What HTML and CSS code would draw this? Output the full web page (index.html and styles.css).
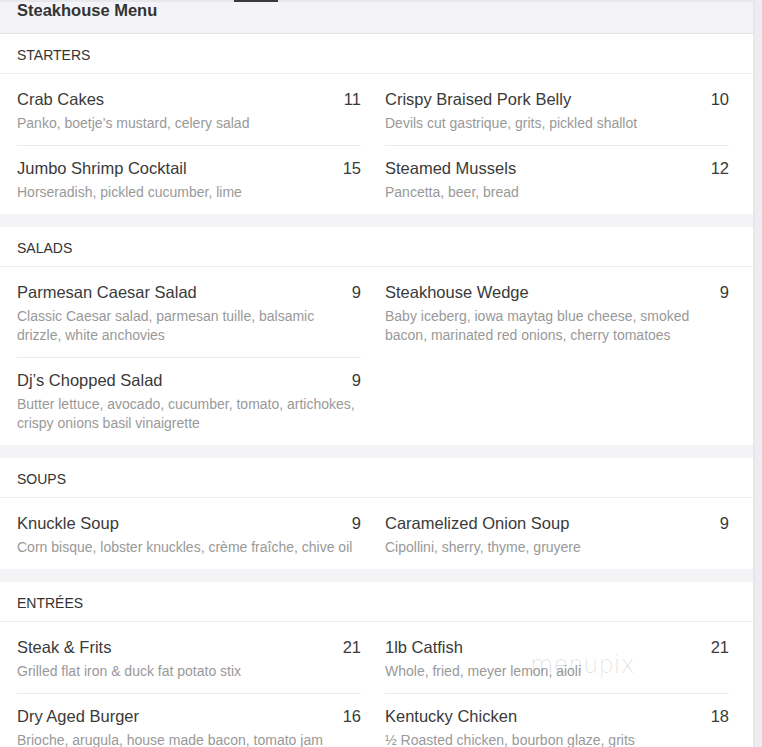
FILE: index.html
```html
<!DOCTYPE html>
<html lang="en">
<head>
<meta charset="utf-8">
<title>Steakhouse Menu</title>
<link rel="stylesheet" href="styles.css">
</head>
<body>
<div class="page">
  <main class="menu">
    <header class="menu-header">
      <span class="tab-indicator"></span>
      <h1 class="menu-title">Steakhouse Menu</h1>
    </header>

    <section class="card">
      <h2 class="card-title">STARTERS</h2>
      <div class="cols">
        <div class="col">
          <div class="item"><div class="item-top"><span class="name">Crab Cakes</span><span class="price">11</span></div><p class="desc">Panko, boetje’s mustard, celery salad</p></div>
          <div class="item"><div class="item-top"><span class="name">Jumbo Shrimp Cocktail</span><span class="price">15</span></div><p class="desc">Horseradish, pickled cucumber, lime</p></div>
        </div>
        <div class="col">
          <div class="item"><div class="item-top"><span class="name">Crispy Braised Pork Belly</span><span class="price">10</span></div><p class="desc">Devils cut gastrique, grits, pickled shallot</p></div>
          <div class="item"><div class="item-top"><span class="name">Steamed Mussels</span><span class="price">12</span></div><p class="desc">Pancetta, beer, bread</p></div>
        </div>
      </div>
    </section>

    <section class="card">
      <h2 class="card-title">SALADS</h2>
      <div class="cols">
        <div class="col">
          <div class="item"><div class="item-top"><span class="name">Parmesan Caesar Salad</span><span class="price">9</span></div><p class="desc">Classic Caesar salad, parmesan tuille, balsamic drizzle, white anchovies</p></div>
          <div class="item"><div class="item-top"><span class="name">Dj’s Chopped Salad</span><span class="price">9</span></div><p class="desc">Butter lettuce, avocado, cucumber, tomato, artichokes, crispy onions basil vinaigrette</p></div>
        </div>
        <div class="col">
          <div class="item"><div class="item-top"><span class="name">Steakhouse Wedge</span><span class="price">9</span></div><p class="desc">Baby iceberg, iowa maytag blue cheese, smoked bacon, marinated red onions, cherry tomatoes</p></div>
        </div>
      </div>
    </section>

    <section class="card">
      <h2 class="card-title">SOUPS</h2>
      <div class="cols">
        <div class="col">
          <div class="item"><div class="item-top"><span class="name">Knuckle Soup</span><span class="price">9</span></div><p class="desc">Corn bisque, lobster knuckles, crème fraîche, chive oil</p></div>
        </div>
        <div class="col">
          <div class="item"><div class="item-top"><span class="name">Caramelized Onion Soup</span><span class="price">9</span></div><p class="desc">Cipollini, sherry, thyme, gruyere</p></div>
        </div>
      </div>
    </section>

    <section class="card">
      <h2 class="card-title">ENTRÉES</h2>
      <div class="cols">
        <div class="col">
          <div class="item"><div class="item-top"><span class="name">Steak &amp; Frits</span><span class="price">21</span></div><p class="desc">Grilled flat iron &amp; duck fat potato stix</p></div>
          <div class="item"><div class="item-top"><span class="name">Dry Aged Burger</span><span class="price">16</span></div><p class="desc">Brioche, arugula, house made bacon, tomato jam</p></div>
        </div>
        <div class="col">
          <div class="item"><div class="item-top"><span class="name">1lb Catfish</span><span class="price">21</span></div><p class="desc">Whole, fried, meyer lemon, aioli</p></div>
          <div class="item"><div class="item-top"><span class="name">Kentucky Chicken</span><span class="price">18</span></div><p class="desc">½ Roasted chicken, bourbon glaze, grits</p></div>
        </div>
      </div>
    </section>
  </main>
  <div class="side-strip"></div>
  <div class="watermark">menupix</div>
</div>
</body>
</html>
```

FILE: styles.css
```css
* { box-sizing: border-box; }

html, body {
  margin: 0;
  padding: 0;
}

body {
  background: #ececf1;
  font-family: "Liberation Sans", Arial, sans-serif;
  color: #333;
  height: 747px;
  overflow: hidden;
}

.page {
  display: flex;
  position: relative;
}

.menu {
  width: 753px;
  background: #f4f4f6;
  padding-bottom: 40px;
}

.side-strip {
  width: 9px;
  background: #ececf1;
  border-left: 2px solid #e6e6eb;
}

.menu-header {
  position: relative;
  height: 34px;
  background: #f4f4f8;
  border-top: 2px solid #e7e7ec;
  border-bottom: 1px solid #e4e4e8;
  padding-left: 17px;
}

.tab-indicator {
  position: absolute;
  top: -2px;
  left: 234px;
  width: 44px;
  height: 2px;
  background: #3a3a3a;
}

.menu-title {
  margin: 0;
  margin-top: -2px;
  font-size: 16.5px;
  line-height: 20px;
  font-weight: bold;
  color: #333;
}

.card {
  background: #fff;
  margin-bottom: 13px;
}

.card-title {
  margin: 0;
  height: 40px;
  line-height: 42px;
  padding-left: 17px;
  font-size: 14px;
  font-weight: normal;
  color: #333;
  border-bottom: 1px solid #ececec;
}

.cols {
  display: grid;
  grid-template-columns: 1fr 1fr;
  column-gap: 24px;
  padding: 3px 24px 0 17px;
}

.item {
  padding: 11px 0 12px;
  border-top: 1px solid #ebebeb;
}

.item:first-child {
  border-top: none;
}

.item-top {
  display: flex;
  justify-content: space-between;
  align-items: center;
  height: 22px;
  font-size: 16.5px;
  line-height: 22px;
  color: #3a3a3a;
}

.desc {
  margin: 4px 0 0;
  font-size: 14px;
  line-height: 19px;
  color: #999;
}

.watermark {
  position: absolute;
  left: 530px;
  top: 650px;
  font-size: 24px;
  line-height: 30px;
  color: rgba(0, 0, 0, 0.12);
  font-family: "DejaVu Sans", sans-serif;
  font-weight: 300;
  pointer-events: none;
}
```
